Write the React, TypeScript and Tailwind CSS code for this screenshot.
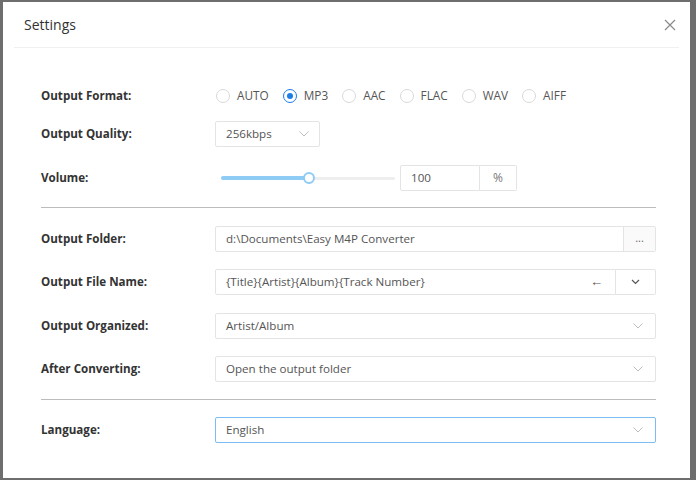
import React from "react";

const Chevron = ({ className = "" }: { className?: string }) => (
  <svg width="10" height="6" viewBox="0 0 10 6" className={className} fill="none">
    <path d="M0.5 0.5 L5 5 L9.5 0.5" stroke="#bdbdbd" strokeWidth="1" />
  </svg>
);

const Label = ({ children }: { children: React.ReactNode }) => (
  <div className="w-[174px] shrink-0 text-[11.6px] font-bold text-[#333]">{children}</div>
);

const Radio = ({ label, checked }: { label: string; checked?: boolean }) => (
  <div className="flex items-center">
    <div
      className={`w-[14px] h-[14px] rounded-full border flex items-center justify-center ${
        checked ? "border-[#1a7ee6]" : "border-[#d9d9d9]"
      }`}
    >
      {checked && <div className="w-[6px] h-[6px] rounded-full bg-[#1a7ee6]" />}
    </div>
    <span className="ml-[7px] text-[11.8px] text-[#555]">{label}</span>
  </div>
);

const Select = ({ value, blue }: { value: string; blue?: boolean }) => (
  <div
    className={`flex-1 h-[26px] border ${blue ? "border-[#7cbcf5]" : "border-[#e4e4e4]"} rounded-[2px] flex items-center justify-between pl-[10px] pr-[12px]`}
  >
    <span className="text-[11.6px] text-[#555]">{value}</span>
    <Chevron />
  </div>
);

export default function App() {
  return (
    <div
      className="w-[696px] h-[480px] bg-[#6e6e6e] pt-[2px] pl-[3px] pr-[6px] pb-[2px] overflow-hidden"
      style={{ fontFamily: '"Open Sans", "Noto Sans", sans-serif' }}
    >
      <div className="w-full h-full bg-white flex flex-col">
        <div className="h-[46px] mx-[11px] border-b border-[#f0f0f0] flex items-center justify-between pl-[10px] pr-[3px]">
          <span className="text-[14px] text-[#333]">Settings</span>
          <svg width="12" height="12" viewBox="0 0 12 12">
            <path d="M1 1 L11 11 M11 1 L1 11" stroke="#8a8a8a" strokeWidth="1.2" />
          </svg>
        </div>
        <div className="pl-[38px] pr-[34px] pt-[35px]">
          <div className="flex items-center h-[26px]">
            <Label>Output Format:</Label>
            <div className="flex items-center gap-[14px] pl-[1px]">
              <Radio label="AUTO" />
              <Radio label="MP3" checked />
              <Radio label="AAC" />
              <Radio label="FLAC" />
              <Radio label="WAV" />
              <Radio label="AIFF" />
            </div>
          </div>
          <div className="flex items-center h-[26px] mt-[12px]">
            <Label>Output Quality:</Label>
            <div className="w-[105px] h-[26px] border border-[#e4e4e4] rounded-[2px] flex items-center justify-between pl-[10px] pr-[10px]">
              <span className="text-[11.6px] text-[#555]">256kbps</span>
              <Chevron />
            </div>
          </div>
          <div className="flex items-center h-[26px] mt-[18px]">
            <Label>Volume:</Label>
            <div className="w-[185px] pl-[6px] pr-[5px] relative flex items-center h-[12px]">
              <div className="w-full h-[3px] bg-[#eeeeee] rounded-full" />
              <div className="absolute left-[6px] w-[88px] h-[4px] bg-[#8ecbf5] rounded-full" />
              <div className="absolute left-[88px] w-[12px] h-[12px] rounded-full border-2 border-[#8ecbf5] bg-white" />
            </div>
            <div className="flex h-[26px]">
              <div className="w-[80px] border border-[#e4e4e4] rounded-l-[2px] flex items-center pl-[10px] text-[11.6px] text-[#555]">100</div>
              <div className="w-[37px] border border-l-0 border-[#e4e4e4] rounded-r-[2px] flex items-center justify-center text-[12px] text-[#777]">%</div>
            </div>
          </div>
          <div className="h-px bg-[#bcbcbc] mt-[16px]" />
          <div className="flex items-center h-[26px] mt-[18px]">
            <Label>Output Folder:</Label>
            <div className="flex-1 flex h-[26px] border border-[#e4e4e4] rounded-[2px]">
              <div className="flex-1 flex items-center pl-[10px] text-[11.6px] text-[#555]">d:\Documents\Easy M4P Converter</div>
              <div className="w-[32px] border-l border-[#e4e4e4] bg-[#fafafa] flex items-center justify-center text-[11px] text-[#666] leading-none pb-[4px]">...</div>
            </div>
          </div>
          <div className="flex items-center h-[26px] mt-[17px]">
            <Label>Output File Name:</Label>
            <div className="flex-1 flex h-[26px]">
              <div className="flex-1 flex items-center justify-between border border-[#e4e4e4] rounded-l-[2px] pl-[10px] pr-[12px]">
                <span className="text-[11.6px] text-[#555]">{"{Title}{Artist}{Album}{Track Number}"}</span>
                <span className="text-[13px] text-[#555]">←</span>
              </div>
              <div className="w-[40px] border border-l-0 border-[#e4e4e4] rounded-r-[2px] flex items-center justify-center">
                <svg width="9" height="6" viewBox="0 0 9 6" fill="none">
                  <path d="M1 1 L4.5 4.5 L8 1" stroke="#555" strokeWidth="1.2" />
                </svg>
              </div>
            </div>
          </div>
          <div className="flex items-center h-[26px] mt-[18px]">
            <Label>Output Organized:</Label>
            <Select value="Artist/Album" />
          </div>
          <div className="flex items-center h-[26px] mt-[17px]">
            <Label>After Converting:</Label>
            <Select value="Open the output folder" />
          </div>
          <div className="h-px bg-[#bcbcbc] mt-[17px]" />
          <div className="flex items-center h-[26px] mt-[17px]">
            <Label>Language:</Label>
            <Select value="English" blue />
          </div>
        </div>
      </div>
    </div>
  );
}
